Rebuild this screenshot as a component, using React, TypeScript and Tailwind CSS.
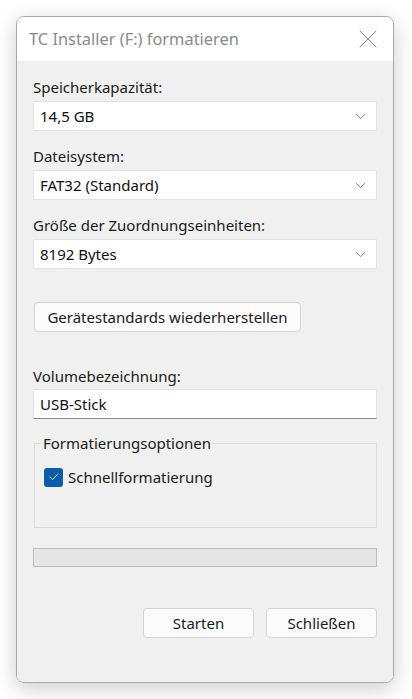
import { Check, ChevronDown, X } from "lucide-react";

const font = { fontFamily: '"Segoe UI", "Noto Sans", sans-serif' };

function Combo({ label, value, first }: { label: string; value: string; first?: boolean }) {
  return (
    <div className={first ? "" : "mt-[14px]"}>
      <div className="h-[22px] leading-[22px] text-[15px] text-[#1a1a1a]">{label}</div>
      <div className="mt-[3px] h-[30px] bg-white border border-[#e3e3e3] flex items-center justify-between pl-[6px] pr-[7px] text-[15px] text-[#111]">
        <span>{value}</span>
        <ChevronDown size={17} strokeWidth={1.2} className="text-[#6a6a6a]" />
      </div>
    </div>
  );
}

function Button({ children, className }: { children: React.ReactNode; className?: string }) {
  return (
    <button
      className={
        "h-[30px] bg-[#fbfbfb] border border-[#d3d3d3] rounded-[4px] text-[15px] text-[#1a1a1a] " +
        (className ?? "")
      }
    >
      {children}
    </button>
  );
}

export default function App() {
  return (
    <div className="h-[699px] bg-white pt-4 pl-4" style={font}>
      <div className="w-[378px] h-[667px] rounded-lg border border-[#a9a9a9] overflow-hidden flex flex-col shadow-[0_6px_22px_rgba(0,0,0,0.2)]">
        <div className="h-[44px] bg-white flex items-center justify-between pl-[12px] pr-[9px]">
          <span className="text-[16.4px] text-[#8a8a8a]">TC Installer (F:) formatieren</span>
          <X size={32} strokeWidth={0.75} className="text-[#8a8a8a]" />
        </div>
        <div className="flex-1 bg-[#f0f0f0] px-[16px] pt-[15px]">
          <Combo first label="Speicherkapazität:" value="14,5 GB" />
          <Combo label="Dateisystem:" value="FAT32 (Standard)" />
          <Combo label="Größe der Zuordnungseinheiten:" value="8192 Bytes" />

          <Button className="mt-[33px] w-[267px] ml-px">Gerätestandards wiederherstellen</Button>

          <div className="mt-[33px] h-[22px] leading-[22px] text-[15px] text-[#1a1a1a]">Volumebezeichnung:</div>
          <div className="mt-[2px] h-[30px] bg-white border border-[#e3e3e3] border-b-[#8a8a8a] flex items-center pl-[6px] text-[15px] text-[#111]">
            USB-Stick
          </div>

          <fieldset className="mt-[13px] h-[96px] border border-[#dadada] px-[6px] ml-px">
            <legend className="px-[2px] text-[15px] leading-[22px] text-[#1a1a1a]">Formatierungsoptionen</legend>
            <label className="mt-[12px] ml-[3px] flex items-center gap-[5px] text-[15px] text-[#1a1a1a]">
              <span className="w-[19px] h-[19px] rounded-[3px] bg-[#0b5cad] flex items-center justify-center">
                <Check size={12} strokeWidth={1.6} className="text-white" />
              </span>
              Schnellformatierung
            </label>
          </fieldset>

          <div className="mt-[20px] h-[19px] bg-[#e6e6e6] border border-[#bcbcbc]" />

          <div className="mt-[41px] flex justify-end gap-[12px]">
            <Button className="w-[111px]">Starten</Button>
            <Button className="w-[111px]">Schließen</Button>
          </div>
        </div>
      </div>
    </div>
  );
}
